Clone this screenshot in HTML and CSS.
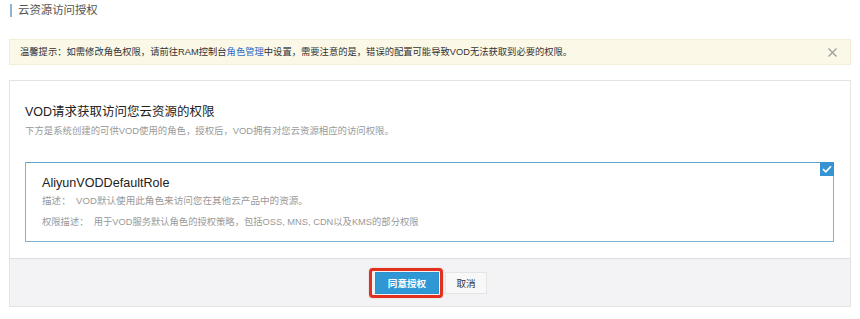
FILE: index.html
```html
<!DOCTYPE html>
<html lang="zh-CN">
<head>
<meta charset="utf-8">
<title>云资源访问授权</title>
<link rel="stylesheet" href="styles.css">
</head>
<body>
<div class="page">
  <div class="page-title">云资源访问授权</div>
  <div class="alert">
    <span class="alert-text">温馨提示：如需修改角色权限，请前往RAM控制台<a class="link" href="#">角色管理</a>中设置，需要注意的是，错误的配置可能导致VOD无法获取到必要的权限。</span>
    <svg class="alert-close" width="9" height="9" viewBox="0 0 9 9"><path d="M0.5 0.5 L8.5 8.5 M8.5 0.5 L0.5 8.5" stroke="#9a9a9a" stroke-width="1.1" fill="none"/></svg>
  </div>
  <div class="panel">
    <div class="panel-body">
      <div class="panel-heading">VOD请求获取访问您云资源的权限</div>
      <div class="panel-sub">下方是系统创建的可供VOD使用的角色，授权后，VOD拥有对您云资源相应的访问权限。</div>
      <div class="role-card">
        <div class="role-check">
          <svg width="10" height="8" viewBox="0 0 10 8"><path d="M1 4.2 L3.8 6.8 L9 1.2" stroke="#fff" stroke-width="1.6" fill="none"/></svg>
        </div>
        <div class="role-name">AliyunVODDefaultRole</div>
        <div class="role-line">描述：&nbsp; VOD默认使用此角色来访问您在其他云产品中的资源。</div>
        <div class="role-line role-perm">权限描述：&nbsp; 用于VOD服务默认角色的授权策略，包括OSS, MNS, CDN以及KMS的部分权限</div>
      </div>
    </div>
    <div class="panel-footer">
      <div class="highlight"><button class="btn btn-primary">同意授权</button></div>
      <button class="btn btn-default">取消</button>
    </div>
  </div>
</div>
</body>
</html>
```
FILE: styles.css
```css
* { box-sizing: border-box; }
html, body { margin: 0; padding: 0; background: #fff; }
body {
  font-family: "Liberation Sans", "Noto Sans CJK SC", sans-serif;
  color: #333;
}
.page { padding: 4px 9px 0 9px; width: 860px; }
.page-title {
  margin-left: 1px;
  border-left: 2px solid #8db4d2;
  padding-left: 6px;
  font-size: 11.4px;
  line-height: 13px;
  height: 13px;
  color: #555;
}
.alert {
  margin-top: 22px;
  height: 26px;
  background: #fcf8e7;
  border: 1px solid #f3eed8;
  display: flex;
  align-items: center;
  justify-content: space-between;
  padding: 0 13px 0 10px;
}
.alert-text { font-size: 9.3px; color: #333; line-height: 12px; }
.link { color: #2b6fc7; text-decoration: none; }
.alert-close { display: block; }
.panel {
  margin-top: 15px;
  border: 1px solid #e3e3e3;
  background: #fff;
}
.panel-body { padding: 23px 16px 16px 15px; }
.panel-heading { font-size: 12.5px; line-height: 16px; color: #222; }
.panel-sub { margin-top: 4px; font-size: 9.4px; line-height: 14px; color: #999; }
.role-card {
  position: relative;
  margin-top: 24px;
  border: 1px solid #7fb2d4;
  border-top-color: #66a3c9;
  padding: 12px 16px 12px 16px;
}
.role-check {
  position: absolute;
  top: -1px;
  right: -1px;
  width: 14px;
  height: 14px;
  background: #3694d2;
  display: flex;
  align-items: center;
  justify-content: center;
}
.role-name { font-size: 12.6px; line-height: 16px; color: #222; }
.role-line { margin-top: 3px; font-size: 9.6px; line-height: 14px; color: #999; }
.role-perm { margin-top: 7px; font-size: 9.3px; }
.panel-footer {
  height: 48px;
  border-top: 1px solid #dedde0;
  background: #f3f2f4;
  display: flex;
  align-items: center;
  justify-content: center;
  gap: 6px;
  padding-left: 2px;
  padding-top: 1px;
}
.highlight {
  border: 3px solid #e2301f;
  border-radius: 4px;
  padding: 1px;
  margin: -4px -4px -4px -6px;
  padding-left: 3px;
  box-shadow: 0 0 1px rgba(160,20,10,0.6);
  display: flex;
}
.btn {
  height: 22px;
  font-family: inherit;
  font-size: 9.6px;
  border-radius: 0;
  padding: 0;
  cursor: pointer;
}
.btn-primary {
  width: 64px;
  background: #2f97d4;
  color: #fff;
  border: 1px solid #2b90cc;
  font-weight: bold;
}
.btn-default {
  width: 42px;
  background: #f8f8f8;
  color: #333;
  border: 1px solid #e5e5e5;
}
```
